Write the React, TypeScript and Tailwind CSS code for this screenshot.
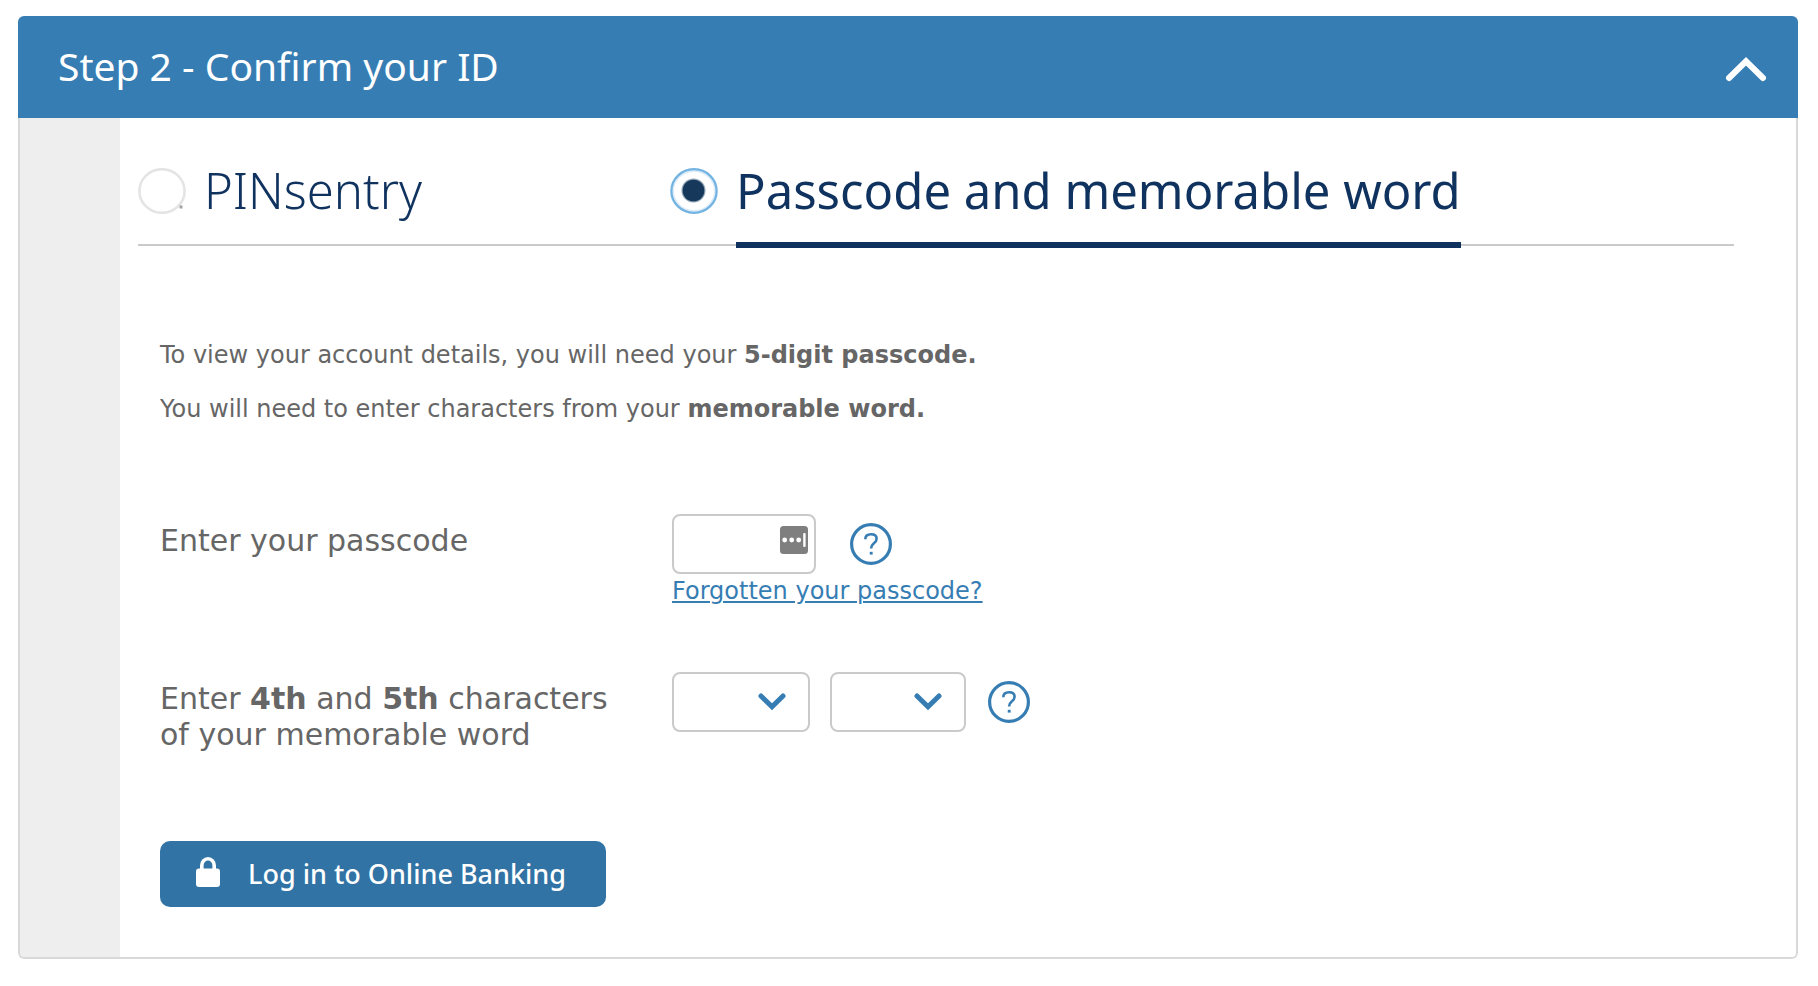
import { useState } from 'react'
import type { ReactNode } from 'react'

function HelpButton({ label }: { label: string }) {
  return (
    <button type="button" aria-label={label} className="shrink-0 text-[#367db3]">
      <svg viewBox="0 0 42 42" className="h-[42px] w-[42px]" fill="none" stroke="currentColor">
        <circle cx="21" cy="21" r="19.4" strokeWidth="3.2" />
        <path d="M15.3 16.2c0-3 2.2-4.9 5.8-4.9 3.4 0 5.5 1.7 5.5 4.5 0 2.2-1 3.3-2.9 4.8-1.9 1.5-2.6 2.4-2.6 5" strokeWidth="2.6" />
        <path d="M21.2 28.8v2.8" strokeWidth="2.9" />
      </svg>
    </button>
  )
}

type MethodProps = {
  value: string
  checked: boolean
  onChange: (value: string) => void
  children: ReactNode
}

function Method({ value, checked, onChange, children }: MethodProps) {
  const id = `method-${value}`
  return (
    <div className="flex gap-[18px]">
      <span className="relative mt-[50px] block h-[46px] w-12 shrink-0">
        <input
          id={id}
          type="radio"
          name="method"
          value={value}
          checked={checked}
          onChange={() => onChange(value)}
          className="absolute inset-0 h-full w-full cursor-pointer appearance-none"
        />
        <svg viewBox="0 0 48 46" className="pointer-events-none relative block h-[46px] w-12" fill="none">
          {checked ? (
            <>
              <ellipse cx="24" cy="23" rx="22" ry="21" stroke="#dcecf8" strokeWidth="4" />
              <ellipse cx="24" cy="23" rx="22.6" ry="21.8" stroke="#74b4e2" strokeWidth="2.2" />
              <circle cx="23.5" cy="22.5" r="12" fill="#8fa3b4" />
              <circle cx="23.5" cy="22.5" r="10.8" fill="#16385a" />
            </>
          ) : (
            <>
              <ellipse cx="24" cy="23" rx="22.6" ry="21.8" stroke="#e4e4e4" strokeWidth="2.6" />
              <rect x="41.5" y="37.5" width="3" height="3" fill="#a3a3a3" />
            </>
          )}
        </svg>
      </span>
      <label
        htmlFor={id}
        className={
          checked
            ? '-mb-1 cursor-pointer border-b-[6px] border-[#10325f] pt-[34px] text-[49px] leading-[76px]'
            : 'cursor-pointer pt-[34px] text-[49px] leading-[76px] font-light'
        }
      >
        {children}
      </label>
    </div>
  )
}

function CharacterSelect({ label, className }: { label: string; className: string }) {
  return (
    <span className={`relative block h-[60px] ${className}`}>
      <select
        aria-label={label}
        defaultValue=""
        className="h-full w-full appearance-none rounded-lg border-2 border-[#cacaca] bg-white pl-4 text-2xl"
      >
        <option value=""></option>
        {'abcdefghijklmnopqrstuvwxyz'.split('').map((c) => (
          <option key={c}>{c}</option>
        ))}
      </select>
      <svg
        viewBox="0 0 28 18"
        className="pointer-events-none absolute top-[21px] right-6 h-[18px] w-7"
        fill="none"
        stroke="#367db3"
        strokeWidth="5"
        strokeLinecap="round"
      >
        <path d="M3 3l11 10.8L25 3" />
      </svg>
    </span>
  )
}

export default function App() {
  const [method, setMethod] = useState('passcode')
  const [open, setOpen] = useState(true)

  return (
    <main className="bg-white pt-4 pr-5 pb-6 pl-[18px] font-['DejaVu_Sans',sans-serif] text-[#666]">
      <section className="overflow-hidden rounded-md">
        <header className="flex h-[102px] items-center justify-between bg-[#367db3] pr-[31px] pl-10 text-white">
          <h1 className="pb-0.5 font-['Noto_Sans',sans-serif] text-[39px] leading-[52px]">Step 2 - Confirm your ID</h1>
          <button type="button" aria-label="Toggle step 2" aria-expanded={open} onClick={() => setOpen(!open)}>
            <svg viewBox="0 0 42 26" className="mt-1 h-[26px] w-[42px]" fill="none" stroke="currentColor" strokeWidth="6" strokeLinecap="round">
              <path d="M4 22L21 5.300L38 22" />
            </svg>
          </button>
        </header>

        {open && (
          <div className="rounded-b-md border-2 border-t-0 border-[#d8d8d8] bg-[linear-gradient(to_right,#eee_100px,#fff_100px)] pl-[118px]">
            <fieldset
              aria-label="Login method"
              className="mr-[62px] grid h-32 grid-cols-[532px_1fr] border-b-2 border-[#cacaca] font-['Noto_Sans',sans-serif] text-[#10325f]"
            >
              <Method value="pinsentry" checked={method === 'pinsentry'} onChange={setMethod}>PINsentry</Method>
              <Method value="passcode" checked={method === 'passcode'} onChange={setMethod}>Passcode and memorable word</Method>
            </fieldset>

            <form className="pt-[82px] pb-[50px] pl-[22px]" onSubmit={(e) => e.preventDefault()}>
              <div className="text-2xl leading-[54px]">
                <p>To view your account details, you will need your <strong>5-digit passcode.</strong></p>
                <p>You will need to enter characters from your <strong>memorable word.</strong></p>
              </div>

              <div className="mt-[78px] grid grid-cols-[512px_1fr]">
                <label htmlFor="passcode" className="pt-[9px] text-[30px] leading-9">Enter your passcode</label>
                <div>
                  <div className="flex items-center gap-[34px]">
                    <span className="relative block h-[60px] w-36">
                      <input id="passcode" type="password" maxLength={5} className="h-full w-full rounded-lg border-2 border-[#cacaca] bg-white pr-10 pl-3 text-2xl" />
                      <svg viewBox="0 0 28 28" className="pointer-events-none absolute top-3 right-2 h-7 w-7" fill="#fff">
                        <rect width="28" height="28" rx="3.5" fill="#7f7f7f" />
                        <circle cx="4.7" cy="14" r="2.4" />
                        <circle cx="11.7" cy="14" r="2.4" />
                        <circle cx="18.7" cy="14" r="2.4" />
                        <rect x="23.2" y="7" width="2.4" height="14" rx="1" />
                      </svg>
                    </span>
                    <HelpButton label="Help with your passcode" />
                  </div>
                  <a href="#forgotten" className="inline-block text-2xl leading-[34px] text-[#367db3] underline decoration-2 underline-offset-2">
                    Forgotten your passcode?
                  </a>
                </div>
              </div>

              <div className="mt-16 grid grid-cols-[512px_1fr]">
                <p className="pt-[9px] text-[30px] leading-9">
                  Enter <strong>4th</strong> and <strong>5th</strong> characters
                  <br />
                  of your memorable word
                </p>
                <div className="flex items-start">
                  <div className="flex h-[60px] items-center gap-[22px]">
                    <div className="flex gap-5">
                      <CharacterSelect label="4th character" className="w-[138px]" />
                      <CharacterSelect label="5th character" className="w-[136px]" />
                    </div>
                    <HelpButton label="Help with your memorable word" />
                  </div>
                </div>
              </div>

              <button
                type="submit"
                className="mt-[88px] flex h-[66px] items-center gap-7 rounded-[10px] bg-[#3173a4] pr-10 pl-9 font-['Noto_Sans',sans-serif] text-[27px] leading-9 font-medium whitespace-nowrap text-white"
              >
                <svg viewBox="0 0 24 30" className="mb-1 h-[30px] w-6" fill="none">
                  <path d="M5.8 14V8.500a6.200 6.700 0 0 1 12.400 0V14" stroke="#fff" strokeWidth="3.6" />
                  <rect y="11.5" width="24" height="18.5" rx="3" fill="#fff" />
                </svg>
                Log in to Online Banking
              </button>
            </form>
          </div>
        )}
      </section>
    </main>
  )
}
